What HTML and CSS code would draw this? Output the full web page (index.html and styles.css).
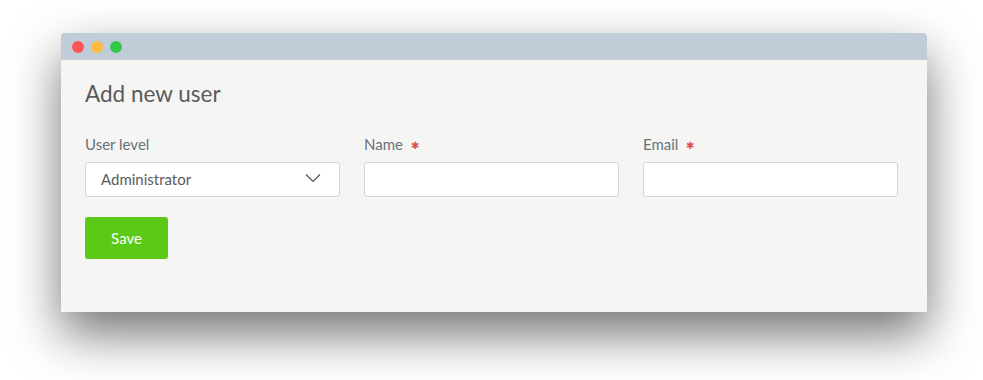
FILE: index.html
```html
<!DOCTYPE html>
<html lang="en">
<head>
  <meta charset="UTF-8">
  <meta name="viewport" content="width=device-width, initial-scale=1.0">
  <title>Add new user</title>
  <link rel="stylesheet" href="styles.css">
</head>
<body>

<div class="window">
  <div class="titlebar">
    <span class="dot red"></span>
    <span class="dot yellow"></span>
    <span class="dot green"></span>
  </div>
  <div class="content">
    <h1>Add new user</h1>
    <form class="user-form">
      <div class="fields">
        <div class="field">
          <label for="userLevel">User level</label>
          <div class="select">
            <span>Administrator</span>
            <svg width="16" height="10" viewBox="0 0 16 10"><path d="M1 1.5 L8 8.5 L15 1.5" fill="none" stroke="#555" stroke-width="1.2"/></svg>
          </div>
        </div>
        <div class="field">
          <label for="name">Name <span class="req">&#x2731;</span></label>
          <input type="text" id="name">
        </div>
        <div class="field">
          <label for="email">Email <span class="req">&#x2731;</span></label>
          <input type="text" id="email">
        </div>
      </div>
      <button type="button">Save</button>
    </form>
  </div>
</div>

</body>
</html>
```

FILE: styles.css
```css
body {
  font-family: Lato, "Open Sans", sans-serif;
  background-color: #fff;
  margin: 0;
  padding: 33px 0 0 61px;
  height: 380px;
  box-sizing: border-box;
  overflow: hidden;
}
.window {
  width: 866px;
  height: 279px;
  background-color: #f5f5f3;
  border-radius: 4px 4px 0 0;
  box-shadow: 0 22px 50px rgba(0, 0, 0, 0.55);
}
.titlebar {
  height: 27px;
  background-color: #c0ccd7;
  border-radius: 4px 4px 0 0;
  display: flex;
  align-items: center;
  gap: 7px;
  padding-left: 11px;
}
.dot {
  width: 12px;
  height: 12px;
  border-radius: 50%;
}
.red { background-color: #fc5753; }
.yellow { background-color: #fdbc40; }
.green { background-color: #33c748; }
.content {
  padding: 20px 29px 0 24px;
}
h1 {
  margin: 0;
  font-size: 22.5px;
  font-weight: normal;
  line-height: 28px;
  color: #5a5a5a;
}
.fields {
  display: grid;
  grid-template-columns: repeat(3, 255px);
  gap: 24px;
  margin-top: 27px;
}
label {
  display: block;
  height: 19px;
  font-size: 15px;
  line-height: 18px;
  color: #66727e;
  margin-bottom: 8px;
}
.req {
  color: #d9534f;
  font-size: 10px;
  line-height: 1;
  margin-left: 4px;
  vertical-align: 1px;
}
.select, input {
  box-sizing: border-box;
  width: 100%;
  height: 35px;
  background-color: #fff;
  border: 1px solid #cfd8dc;
  border-radius: 3px;
  font-family: inherit;
  font-size: 15px;
  margin: 0;
}
.select {
  display: flex;
  align-items: center;
  justify-content: space-between;
  padding: 0 18px 1px 15px;
  color: #5a5a5a;
}
.select svg {
  margin-top: -2px;
}
button {
  margin-top: 20px;
  width: 83px;
  height: 42px;
  background-color: #5ac918;
  color: white;
  border: none;
  border-radius: 3px;
  font-family: inherit;
  font-size: 15px;
  cursor: pointer;
}
```
